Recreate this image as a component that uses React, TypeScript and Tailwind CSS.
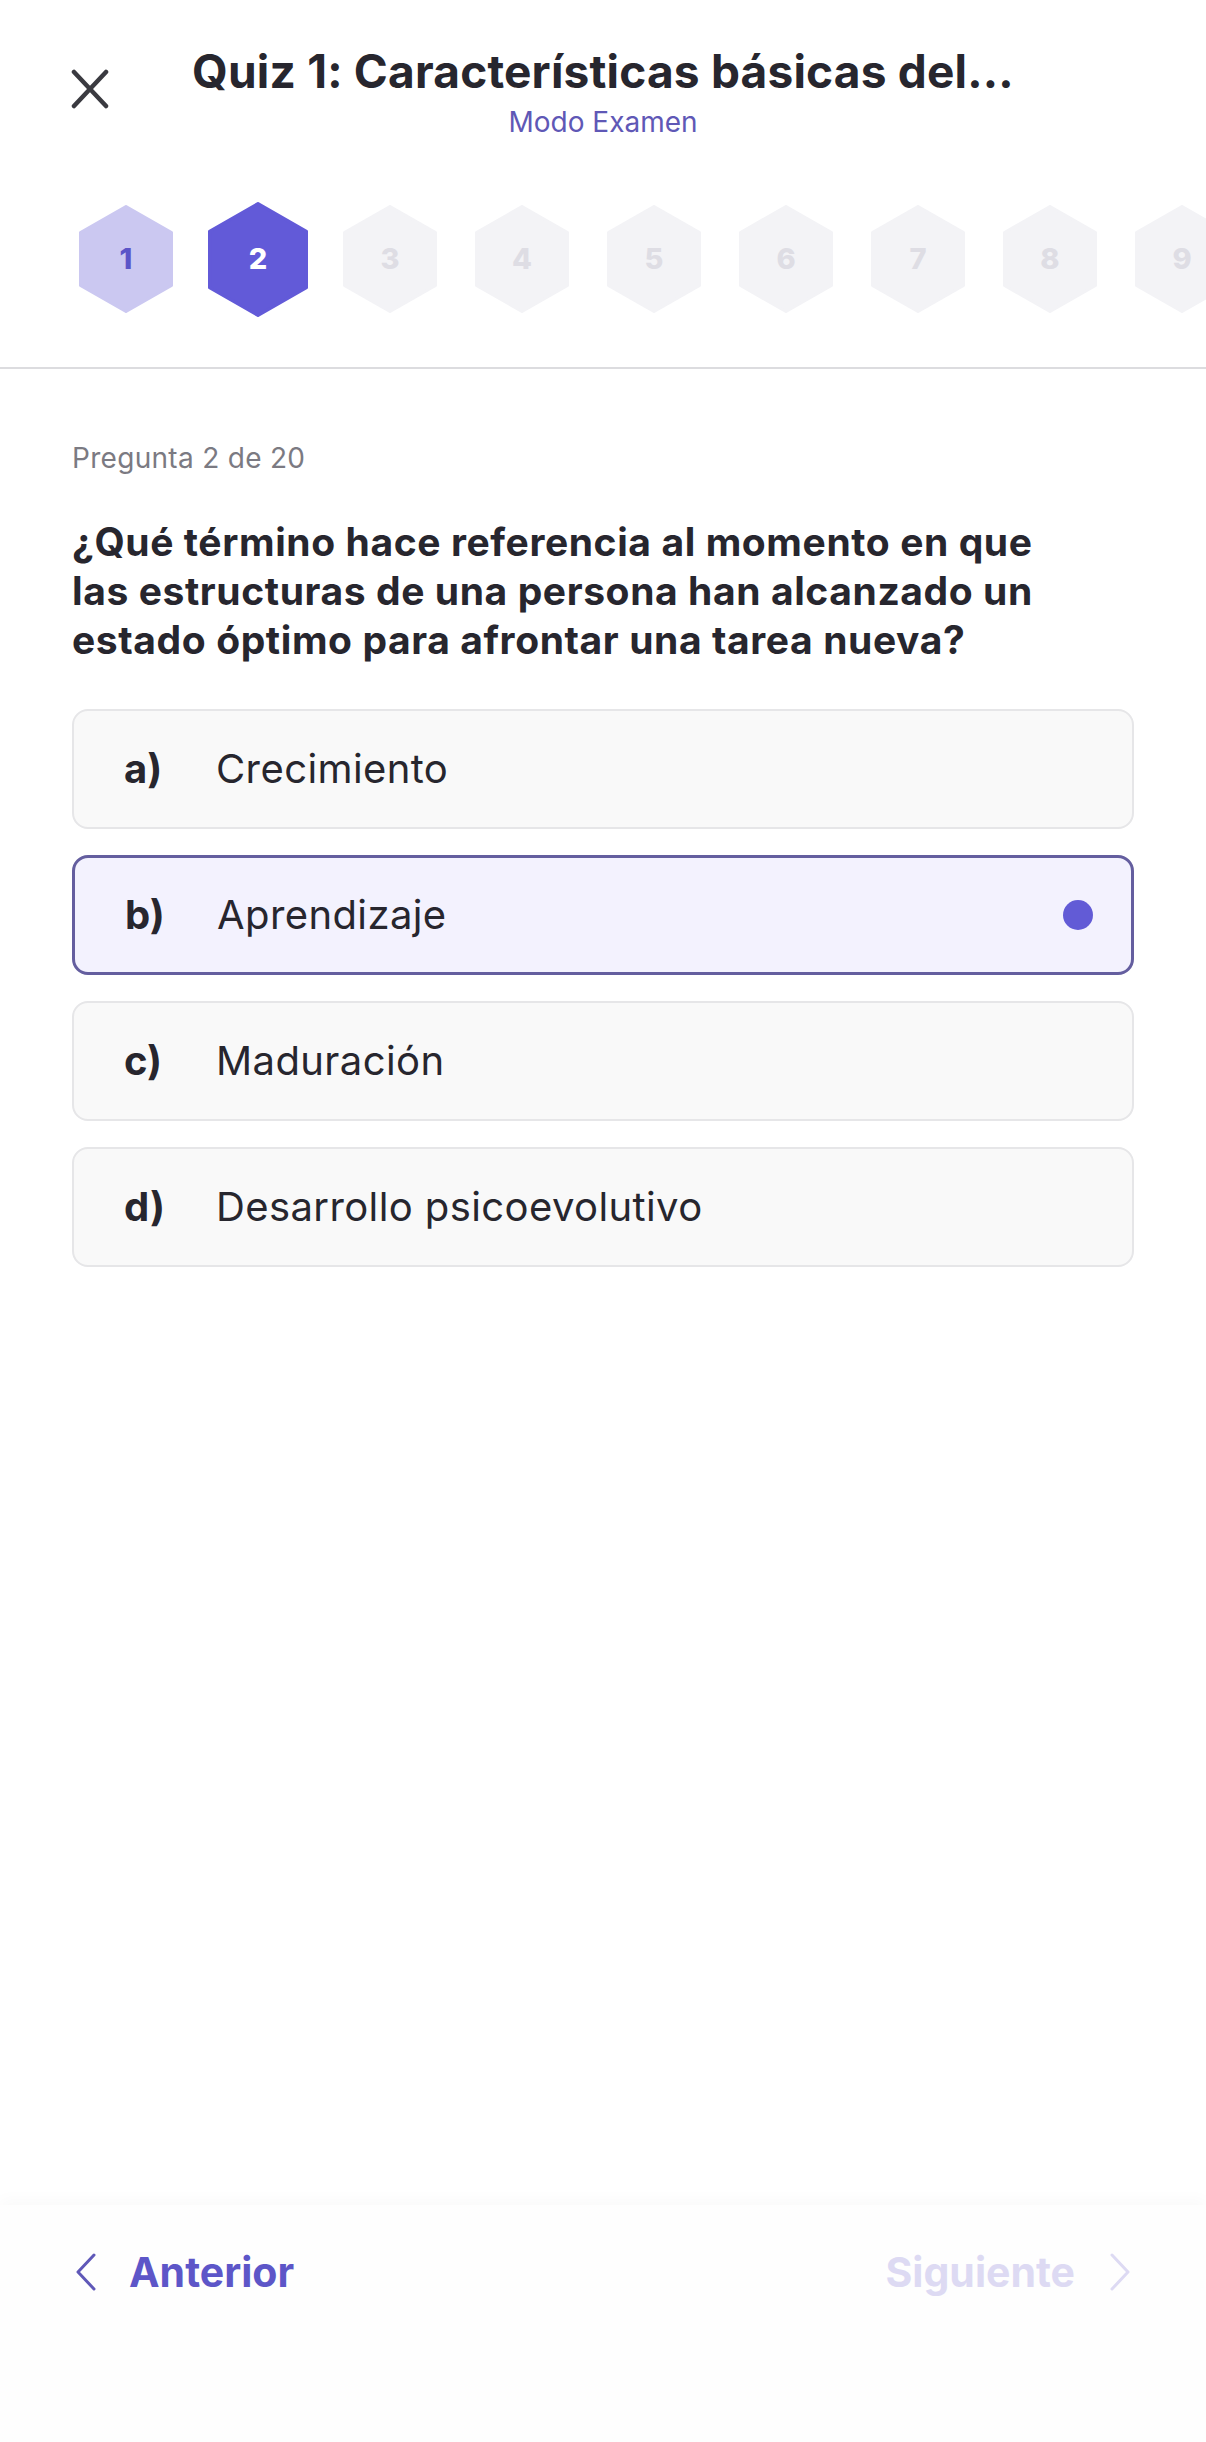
import { useState } from 'react';

const options = [
  { key: 'a)', text: 'Crecimiento' },
  { key: 'b)', text: 'Aprendizaje' },
  { key: 'c)', text: 'Maduración' },
  { key: 'd)', text: 'Desarrollo psicoevolutivo' },
];

const steps = [1, 2, 3, 4, 5, 6, 7, 8, 9, 10];

const Hexagon = ({ n, state }: { n: number; state: 'done' | 'current' | 'todo' }) => {
  const fill = state === 'current' ? '#625ad8' : state === 'done' ? '#cbc8f1' : '#f3f3f6';
  const digit =
    state === 'current' ? 'text-white' : state === 'done' ? 'text-[#5b55c8]' : 'text-[#dedde4]';
  const size = state === 'current' ? 'w-[100px] h-[115px]' : 'w-[94px] h-[108px]';

  return (
    <div className="w-[94px] shrink-0 flex justify-center">
      <div className={`relative shrink-0 ${size}`}>
        <svg viewBox="0 0 94 108" className="w-full h-full" preserveAspectRatio="none">
          <polygon
            points="47,1.5 92.5,27.5 92.5,80.5 47,106.5 1.5,80.5 1.5,27.5"
            fill={fill}
            stroke={fill}
            strokeWidth="3"
            strokeLinejoin="round"
          />
        </svg>
        <span
          className={`absolute inset-0 flex items-center justify-center text-[29px] font-extrabold ${digit}`}
        >
          {n}
        </span>
      </div>
    </div>
  );
};

export default function App() {
  const [selected, setSelected] = useState(1);

  return (
    <div
      className="w-full h-[2442px] flex flex-col bg-white text-[#27262e]"
      style={{ fontFamily: 'Inter, "Noto Sans", sans-serif' }}
    >
      {/* Header */}
      <header className="border-b-2 border-[#dcdcdf] pt-[45px] pb-[50px]">
        <div className="relative px-[150px] text-center">
          <button className="absolute left-[70px] top-[22px] w-[40px] h-[44px] flex items-center justify-center text-[#3a3a40]">
            <svg width="38" height="40" viewBox="0 0 38 40" fill="none">
              <path
                d="M3 3 L35 37 M35 3 L3 37"
                stroke="currentColor"
                strokeWidth="4.5"
                strokeLinecap="round"
              />
            </svg>
          </button>
          <h1 className="text-[46px] leading-[52px] font-bold tracking-[0.2px] whitespace-nowrap">
            Quiz 1: Características básicas del...
          </h1>
          <p className="mt-[8px] text-[28px] leading-[34px] text-[#5f58b6]">Modo Examen</p>
        </div>

        {/* Progress */}
        <div className="mt-[62px] flex items-center gap-[38px] pl-[79px] overflow-hidden h-[116px]">
          {steps.map((n) => (
            <Hexagon key={n} n={n} state={n === 1 ? 'done' : n === 2 ? 'current' : 'todo'} />
          ))}
        </div>
      </header>

      {/* Question */}
      <main className="flex-1 px-[72px] pt-[73px]">
        <p className="text-[28px] leading-[32px] tracking-[0.3px] text-[#7b7a82]">
          Pregunta 2 de 20
        </p>
        <h2 className="mt-[43px] text-[39px] leading-[49px] font-bold tracking-[0.6px]">
          ¿Qué término hace referencia al momento en que
          <br />
          las estructuras de una persona han alcanzado un
          <br />
          estado óptimo para afrontar una tarea nueva?
        </h2>

        <div className="mt-[45px] flex flex-col gap-[26px]">
          {options.map((o, i) => {
            const active = i === selected;
            return (
              <button
                key={o.key}
                onClick={() => setSelected(i)}
                className={`h-[120px] rounded-[16px] flex items-center pl-[50px] pr-[38px] text-left ${
                  active
                    ? 'bg-[#f3f2fe] border-[3px] border-[#645e9f]'
                    : 'bg-[#f9f9f9] border-2 border-[#e6e6e8]'
                }`}
              >
                <span className="w-[92px] text-[40px] font-bold">{o.key}</span>
                <span className="flex-1 text-[40px] tracking-[0.4px]">{o.text}</span>
                {active && <span className="w-[30px] h-[30px] rounded-full bg-[#625bd6]" />}
              </button>
            );
          })}
        </div>
      </main>

      {/* Footer */}
      <footer className="h-[237px] bg-[#fefefe] shadow-[0_-6px_14px_rgba(0,0,0,0.025)] pt-[42px] px-[75px]">
        <div className="flex items-center justify-between h-[50px]">
          <button className="flex items-center gap-[32px] text-[#5d56c8]">
            <svg width="22" height="38" viewBox="0 0 22 38" fill="none">
              <path
                d="M19 2 L3 19 L19 36"
                stroke="#5f58b8"
                strokeWidth="3"
                strokeLinecap="round"
                strokeLinejoin="round"
              />
            </svg>
            <span className="text-[41px] leading-[50px] font-bold">Anterior</span>
          </button>
          <button className="flex items-center gap-[34px] text-[#dddaf3]">
            <span className="text-[41px] leading-[50px] font-bold">Siguiente</span>
            <svg width="22" height="38" viewBox="0 0 22 38" fill="none">
              <path
                d="M3 2 L19 19 L3 36"
                stroke="currentColor"
                strokeWidth="3"
                strokeLinecap="round"
                strokeLinejoin="round"
              />
            </svg>
          </button>
        </div>
      </footer>
    </div>
  );
}
